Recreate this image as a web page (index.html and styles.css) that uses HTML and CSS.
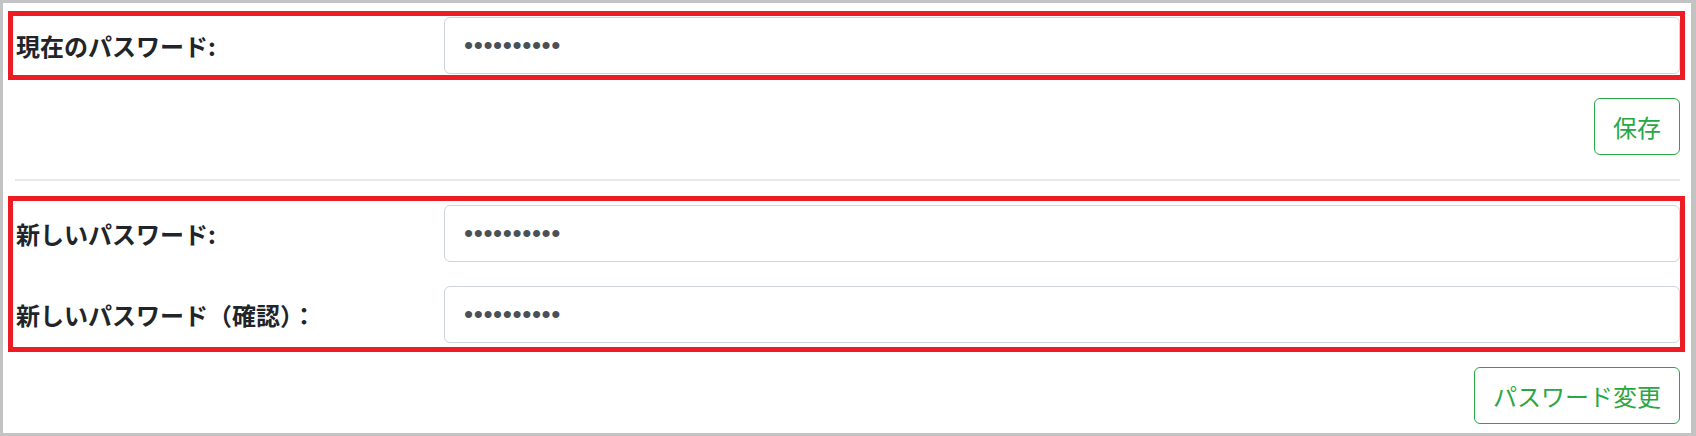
FILE: index.html
```html
<!DOCTYPE html>
<html lang="ja">
<head>
  <meta charset="UTF-8" />
  <meta name="viewport" content="width=device-width, initial-scale=1.0" />
  <title>パスワード変更</title>
  <link rel="stylesheet" href="styles.css">
</head>
<body>
  <div class="panel">
    <form class="section">
      <div class="mark">
        <div class="field">
          <label for="currentPassword">現在のパスワード:</label>
          <input type="password" id="currentPassword" value="password12" />
        </div>
      </div>
      <div class="actions">
        <button type="button">保存</button>
      </div>
    </form>
    <hr />
    <form class="section">
      <div class="mark mark-tall">
        <div class="field">
          <label for="newPassword">新しいパスワード:</label>
          <input type="password" id="newPassword" value="password12" />
        </div>
        <div class="field">
          <label for="confirmPassword">新しいパスワード（確認）：</label>
          <input type="password" id="confirmPassword" value="password12" />
        </div>
      </div>
      <div class="actions">
        <button type="button">パスワード変更</button>
      </div>
    </form>
  </div>
</body>
</html>
```

FILE: styles.css
```css
* {
  box-sizing: border-box;
}
html, body {
  height: 100%;
}
body {
  margin: 0;
  padding: 3px 5px 3px 3px;
  background: #c3c3c3;
  font-family: "Noto Sans CJK JP", "Noto Sans", sans-serif;
  font-size: 24px;
  line-height: 1.5;
  color: #212529;
}
.panel {
  background: #fff;
  height: 100%;
  padding: 14px 11px 0 12px;
}
.mark {
  position: relative;
  margin-bottom: 24px;
}
.mark::after {
  content: "";
  position: absolute;
  top: -6px;
  left: -7px;
  right: -5px;
  bottom: -6px;
  border: 5px solid #ed1c24;
  pointer-events: none;
}
.mark-tall::after {
  top: -9px;
  bottom: -9px;
}
.field {
  display: flex;
  align-items: center;
  margin-bottom: 24px;
}
.field:last-child {
  margin-bottom: 0;
}
.field label {
  width: 429px;
  flex-shrink: 0;
  font-weight: bold;
  padding-left: 1px;
}
.field input {
  flex: 1;
  height: 57px;
  margin: 0;
  padding: 0 18px 0 19px;
  border: 1px solid #ced4da;
  border-radius: 6px;
  font-family: "Liberation Sans", sans-serif;
  font-size: 26px;
  letter-spacing: 0.6px;
  color: #495057;
  background: #fff;
}
.actions {
  display: flex;
  justify-content: flex-end;
}
.actions button {
  height: 57px;
  margin: 0;
  padding: 0 18px;
  border: 1px solid #28a745;
  border-radius: 6px;
  background: #fff;
  color: #28a745;
  font-family: "Noto Sans CJK JP", sans-serif;
  font-size: 24px;
  font-weight: normal;
  line-height: 1.5;
}
hr {
  border: 0;
  height: 2px;
  margin: 24px 0;
  background: #e9e9e9;
}
```
